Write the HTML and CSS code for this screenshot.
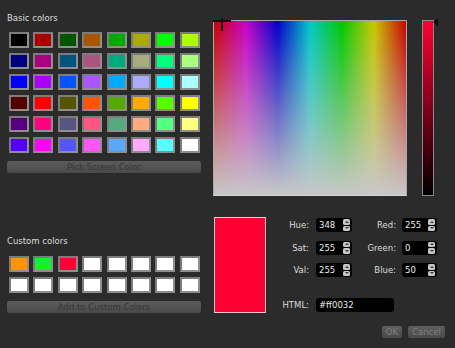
FILE: index.html
```html
<!DOCTYPE html>
<html lang="en">
<head>
    <meta charset="UTF-8">
    <meta name="viewport" content="width=device-width, initial-scale=1.0">
    <title>Select Color</title>

    <link rel="stylesheet" href="styles.css">
</head>
<body>
<div class="dialog">

    <div class="left">
        <p class="group-title">Basic colors</p>
        <div class="swatches">
            <div class="swatch" style="background:#000000"></div>
            <div class="swatch" style="background:#aa0000"></div>
            <div class="swatch" style="background:#005500"></div>
            <div class="swatch" style="background:#aa5500"></div>
            <div class="swatch" style="background:#00aa00"></div>
            <div class="swatch" style="background:#aaaa00"></div>
            <div class="swatch" style="background:#00ff00"></div>
            <div class="swatch" style="background:#aaff00"></div>

            <div class="swatch" style="background:#00007f"></div>
            <div class="swatch" style="background:#aa007f"></div>
            <div class="swatch" style="background:#00557f"></div>
            <div class="swatch" style="background:#aa557f"></div>
            <div class="swatch" style="background:#00aa7f"></div>
            <div class="swatch" style="background:#aaaa7f"></div>
            <div class="swatch" style="background:#00ff7f"></div>
            <div class="swatch" style="background:#aaff7f"></div>

            <div class="swatch" style="background:#0000ff"></div>
            <div class="swatch" style="background:#aa00ff"></div>
            <div class="swatch" style="background:#0055ff"></div>
            <div class="swatch" style="background:#aa55ff"></div>
            <div class="swatch" style="background:#00aaff"></div>
            <div class="swatch" style="background:#aaaaff"></div>
            <div class="swatch" style="background:#00ffff"></div>
            <div class="swatch" style="background:#aaffff"></div>

            <div class="swatch" style="background:#550000"></div>
            <div class="swatch" style="background:#ff0000"></div>
            <div class="swatch" style="background:#555500"></div>
            <div class="swatch" style="background:#ff5500"></div>
            <div class="swatch" style="background:#55aa00"></div>
            <div class="swatch" style="background:#ffaa00"></div>
            <div class="swatch" style="background:#55ff00"></div>
            <div class="swatch" style="background:#ffff00"></div>

            <div class="swatch" style="background:#55007f"></div>
            <div class="swatch" style="background:#ff007f"></div>
            <div class="swatch" style="background:#55557f"></div>
            <div class="swatch" style="background:#ff557f"></div>
            <div class="swatch" style="background:#55aa7f"></div>
            <div class="swatch" style="background:#ffaa7f"></div>
            <div class="swatch" style="background:#55ff7f"></div>
            <div class="swatch" style="background:#ffff7f"></div>

            <div class="swatch" style="background:#5500ff"></div>
            <div class="swatch" style="background:#ff00ff"></div>
            <div class="swatch" style="background:#5555ff"></div>
            <div class="swatch" style="background:#ff55ff"></div>
            <div class="swatch" style="background:#55aaff"></div>
            <div class="swatch" style="background:#ffaaff"></div>
            <div class="swatch" style="background:#55ffff"></div>
            <div class="swatch" style="background:#ffffff"></div>
        </div>
        <button class="wide-btn" disabled>Pick Screen Color</button>

        <p class="group-title custom-title">Custom colors</p>
        <div class="swatches">
            <div class="swatch" style="background:#ff9400"></div>
            <div class="swatch" style="background:#10f22a"></div>
            <div class="swatch" style="background:#ff0032"></div>
            <div class="swatch"></div>
            <div class="swatch"></div>
            <div class="swatch"></div>
            <div class="swatch"></div>
            <div class="swatch"></div>
            <div class="swatch"></div>
            <div class="swatch"></div>
            <div class="swatch"></div>
            <div class="swatch"></div>
            <div class="swatch"></div>
            <div class="swatch"></div>
            <div class="swatch"></div>
            <div class="swatch"></div>
        </div>
        <button class="wide-btn" disabled>Add to Custom Colors</button>
    </div>

    <div class="right">
        <div class="picker">
            <div class="field">
                <span class="cross-h"></span>
                <span class="cross-v"></span>
            </div>
            <div class="lum">
                <span class="lum-arrow"></span>
            </div>
        </div>

        <div class="values">
            <div class="preview"></div>
            <div class="form">
                <label>Hue:</label>
                <div class="spin"><span>348</span><div class="arrows"><i class="up"></i><i class="down"></i></div></div>
                <label>Red:</label>
                <div class="spin"><span>255</span><div class="arrows"><i class="up"></i><i class="down"></i></div></div>

                <label>Sat:</label>
                <div class="spin"><span>255</span><div class="arrows"><i class="up"></i><i class="down"></i></div></div>
                <label>Green:</label>
                <div class="spin"><span>0</span><div class="arrows"><i class="up"></i><i class="down"></i></div></div>

                <label>Val:</label>
                <div class="spin"><span>255</span><div class="arrows"><i class="up"></i><i class="down"></i></div></div>
                <label>Blue:</label>
                <div class="spin"><span>50</span><div class="arrows"><i class="up"></i><i class="down"></i></div></div>

                <label class="html-label">HTML:</label>
                <div class="hex">#ff0032</div>
            </div>
        </div>

        <div class="actions">
            <button class="small-btn ok-btn" disabled>OK</button>
            <button class="small-btn" disabled>Cancel</button>
        </div>
    </div>

</div>
</body>
</html>
```

FILE: styles.css
```css
*{
    box-sizing: border-box;
}

body{
    margin: 0;
    background-color: #2b2b2b;
    color: #dcdcdc;
    font-family: 'DejaVu Sans', Verdana, sans-serif;
    font-size: 8.5px;
}

.dialog{
    display: flex;
    width: 455px;
    height: 348px;
    padding-left: 7px;
}

/* left side */

.left{
    width: 194px;
    display: flex;
    flex-direction: column;
}

.group-title{
    margin: 13px 0 0 0;
    height: 10px;
    line-height: 10px;
}

.custom-title{
    margin-top: 63px;
}

.swatches{
    display: grid;
    grid-template-columns: repeat(8, 20px);
    grid-auto-rows: 16px;
    column-gap: 4.4px;
    row-gap: 5px;
    margin: 9px 0 0 2px;
}

.custom-title + .swatches{
    margin-top: 10px;
}

.swatch{
    background-color: #fff;
    border: 2px solid #8f8f8f;
    border-top-color: #7c7c7c;
    border-left-color: #7c7c7c;
}

.wide-btn{
    margin-top: 8px;
    height: 12px;
    padding: 0;
    border: none;
    border-radius: 2px;
    background: linear-gradient(#5c5c5c, #4a4a4a);
    color: #363636;
    font-family: inherit;
    font-size: 8.5px;
    line-height: 12px;
}

/* right side */

.right{
    flex: 1;
    margin-left: 12px;
    padding-top: 20px;
    padding-right: 10px;
}

.picker{
    display: flex;
    gap: 15px;
}

.field{
    position: relative;
    width: 194px;
    height: 176px;
    border: 1px solid #a8a8a8;
    border-bottom-color: #d4d4d4;
    background:
        linear-gradient(to bottom, rgba(200,200,200,0), rgb(200,200,200)),
        linear-gradient(to right, #c80000, #c800c8, #0000c8, #00c8c8, #00c800, #c8c800, #c80000);
}

.cross-h{
    position: absolute;
    left: -1px;
    top: -1px;
    width: 18px;
    height: 2px;
    background-color: #111;
}

.cross-v{
    position: absolute;
    left: 7px;
    top: -3px;
    width: 2px;
    height: 13px;
    background-color: #111;
}

.lum{
    position: relative;
    width: 12px;
    height: 176px;
    border: 1px solid #8a8a8a;
    background: linear-gradient(#ff0032, #000);
}

.lum-arrow{
    position: absolute;
    left: 100%;
    top: -3px;
    width: 0;
    height: 0;
    border-top: 4px solid transparent;
    border-bottom: 4px solid transparent;
    border-right: 5px solid #0c0c0c;
}

.values{
    display: flex;
    align-items: flex-start;
    margin-top: 21px;
}

.preview{
    width: 52px;
    height: 96px;
    margin-left: 1px;
    background-color: #ff0032;
    border: 1px solid #f4c2cb;
}

.form{
    display: grid;
    grid-template-columns: 50px 36px 50px 35px;
    grid-template-rows: 14px 14px 14px 26.5px;
    row-gap: 8.5px;
    margin-top: 1px;
}

.form label{
    text-align: right;
    line-height: 14px;
    padding-right: 7px;
}

.form label:nth-of-type(even){
    padding-right: 6px;
}

.spin{
    display: flex;
    align-items: center;
    justify-content: space-between;
    background-color: #000;
    border-radius: 3px;
    padding: 0 2px 0 3px;
    color: #ececec;
    line-height: 14px;
}

.arrows{
    display: flex;
    flex-direction: column;
    gap: 1px;
}

.arrows i{
    position: relative;
    display: block;
    width: 7px;
    height: 5.5px;
    background-color: #c6c6c6;
    border-radius: 1.5px;
}

.arrows i::after{
    content: '';
    position: absolute;
    left: 1.5px;
    width: 0;
    height: 0;
    border-left: 2px solid transparent;
    border-right: 2px solid transparent;
}

.arrows .up::after{
    top: 1.5px;
    border-bottom: 2.5px solid #3a3a3a;
}

.arrows .down::after{
    top: 1.5px;
    border-top: 2.5px solid #3a3a3a;
}

.html-label{
    grid-column: 1;
    align-self: end;
    height: 14px;
}

.hex{
    grid-column: 2 / 4;
    align-self: end;
    width: 78px;
    height: 14px;
    background-color: #000;
    border-radius: 3px;
    padding-left: 3px;
    color: #ececec;
    line-height: 14px;
}

.actions{
    display: flex;
    justify-content: flex-end;
    gap: 6px;
    margin-top: 13px;
}

.small-btn{
    height: 12px;
    padding: 0;
    border: none;
    border-radius: 2px;
    background: linear-gradient(#5e5e5e, #4a4a4a);
    color: #7f7f7f;
    font-family: inherit;
    font-size: 8.5px;
    line-height: 12px;
    width: 37px;
}

.ok-btn{
    width: 20px;
}
```
